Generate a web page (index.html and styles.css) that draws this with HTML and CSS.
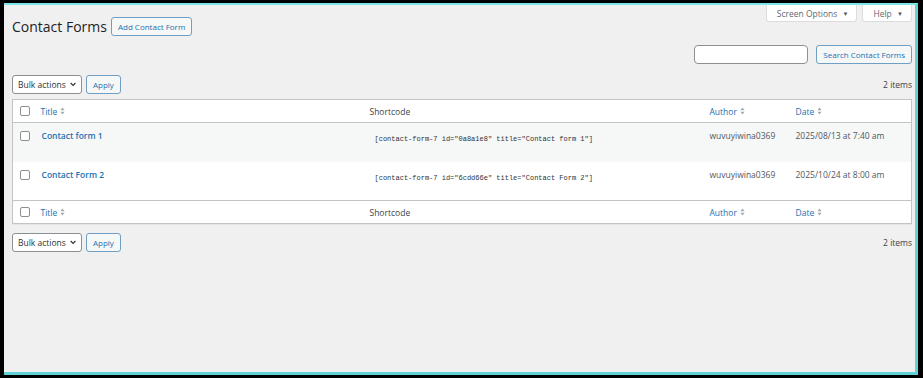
FILE: index.html
```html
<!DOCTYPE html>
<html lang="en">
<head>
  <meta charset="UTF-8">
  <title>Contact Forms</title>
  <link rel="stylesheet" href="styles.css">
</head>
<body>
  <div class="frame">
    <div class="screen-links">
      <button class="tab">Screen Options <span class="caret">&#9660;</span></button>
      <button class="tab">Help <span class="caret">&#9660;</span></button>
    </div>

    <div class="wrap">
      <div class="heading">
        <h1>Contact Forms</h1>
        <button class="btn">Add Contact Form</button>
      </div>

      <div class="search-box">
        <input type="search" class="search-input">
        <button class="btn">Search Contact Forms</button>
      </div>

      <div class="tablenav">
        <div class="actions">
          <div class="select">Bulk actions
            <svg width="7" height="5" viewBox="0 0 7 5"><polyline points="0.8,0.8 3.5,3.6 6.2,0.8" fill="none" stroke="#2c3338" stroke-width="1.3"/></svg>
          </div>
          <button class="btn">Apply</button>
        </div>
        <div class="count">2 items</div>
      </div>

      <table class="list">
        <colgroup>
          <col class="c-check">
          <col class="c-title">
          <col class="c-code">
          <col class="c-author">
          <col>
        </colgroup>
        <thead>
          <tr>
            <th><span class="box"></span></th>
            <th><a class="sort">Title <svg width="5" height="8" viewBox="0 0 5 8"><path d="M2.5 0.5 L4.6 3.2 H0.4 Z M2.5 7.5 L4.6 4.8 H0.4 Z" fill="#a7aaad"/></svg></a></th>
            <th class="plain">Shortcode</th>
            <th><a class="sort">Author <svg width="5" height="8" viewBox="0 0 5 8"><path d="M2.5 0.5 L4.6 3.2 H0.4 Z M2.5 7.5 L4.6 4.8 H0.4 Z" fill="#a7aaad"/></svg></a></th>
            <th><a class="sort">Date <svg width="5" height="8" viewBox="0 0 5 8"><path d="M2.5 0.5 L4.6 3.2 H0.4 Z M2.5 7.5 L4.6 4.8 H0.4 Z" fill="#a7aaad"/></svg></a></th>
          </tr>
        </thead>
        <tbody>
          <tr class="alt">
            <td><span class="box"></span></td>
            <td><a class="row-title">Contact form 1</a></td>
            <td><span class="shortcode">[contact-form-7 id="0a8a1e8" title="Contact form 1"]</span></td>
            <td>wuvuyiwina0369</td>
            <td>2025/08/13 at 7:40 am</td>
          </tr>
          <tr>
            <td><span class="box"></span></td>
            <td><a class="row-title">Contact Form 2</a></td>
            <td><span class="shortcode">[contact-form-7 id="6cdd66e" title="Contact Form 2"]</span></td>
            <td>wuvuyiwina0369</td>
            <td>2025/10/24 at 8:00 am</td>
          </tr>
        </tbody>
        <tfoot>
          <tr>
            <th><span class="box"></span></th>
            <th><a class="sort">Title <svg width="5" height="8" viewBox="0 0 5 8"><path d="M2.5 0.5 L4.6 3.2 H0.4 Z M2.5 7.5 L4.6 4.8 H0.4 Z" fill="#a7aaad"/></svg></a></th>
            <th class="plain">Shortcode</th>
            <th><a class="sort">Author <svg width="5" height="8" viewBox="0 0 5 8"><path d="M2.5 0.5 L4.6 3.2 H0.4 Z M2.5 7.5 L4.6 4.8 H0.4 Z" fill="#a7aaad"/></svg></a></th>
            <th><a class="sort">Date <svg width="5" height="8" viewBox="0 0 5 8"><path d="M2.5 0.5 L4.6 3.2 H0.4 Z M2.5 7.5 L4.6 4.8 H0.4 Z" fill="#a7aaad"/></svg></a></th>
          </tr>
        </tfoot>
      </table>

      <div class="tablenav bottom">
        <div class="actions">
          <div class="select">Bulk actions
            <svg width="7" height="5" viewBox="0 0 7 5"><polyline points="0.8,0.8 3.5,3.6 6.2,0.8" fill="none" stroke="#2c3338" stroke-width="1.3"/></svg>
          </div>
          <button class="btn">Apply</button>
        </div>
        <div class="count">2 items</div>
      </div>
    </div>
  </div>
</body>
</html>
```

FILE: styles.css
```css
* {
  margin: 0; padding: 0; box-sizing: border-box;
  font-family: 'Open Sans', sans-serif;
}
html, body { height: 100%; }
body {
  background: #000;
  padding: 3px 5px 3px 4px;
  font-size: 9px;
  color: #3c434a;
}
.frame {
  height: 100%;
  background: #f0f0f1;
  border-top: 2px solid #7fe6e8;
  border-right: 3px solid #5fd3d6;
  border-bottom: 3px solid #5fd3d6;
  padding: 0 3px 0 8px;
}
.screen-links {
  float: right;
  display: flex;
  gap: 5px;
}
.tab {
  background: #fff;
  border: 1px solid #dcdcde;
  border-top: none;
  border-radius: 0 0 3px 3px;
  height: 17px;
  padding: 0 8px 0 10px;
  font-size: 8.5px;
  color: #646970;
}
.caret { font-size: 6px; color: #50575e; margin-left: 3px; vertical-align: 1px; }
.wrap { padding-top: 12px; }
.heading {
  display: flex;
  align-items: center;
  gap: 4px;
  height: 19px;
}
h1 {
  font-size: 14px;
  font-weight: 400;
  color: #1d2327;
}
.btn {
  background: #f6f7f7;
  border: 1px solid #6f9fc4;
  border-radius: 3px;
  color: #2271b1;
  font-size: 8px;
  height: 19px;
  padding: 0 6px;
}
.search-box {
  display: flex;
  justify-content: flex-end;
  gap: 8px;
  margin-top: 9px;
  clear: both;
}
.search-input {
  width: 114px;
  height: 19px;
  border: 1px solid #8c8f94;
  border-radius: 4px;
  background: #fff;
}
.tablenav {
  display: flex;
  justify-content: space-between;
  align-items: center;
  margin-top: 10px;
  height: 20px;
}
.tablenav.bottom { margin-top: 8px; }
.actions { display: flex; gap: 4px; }
.select {
  display: flex;
  align-items: center;
  gap: 4px;
  height: 19px;
  padding: 0 5px;
  width: 70px;
  background: #fff;
  border: 1px solid #8c8f94;
  border-radius: 3px;
  color: #2c3338;
  font-size: 8.5px;
  white-space: nowrap;
}
.count { color: #3c434a; font-size: 8.5px; }
.list {
  width: 100%;
  margin-top: 5px;
  border: 1px solid #c3c4c7;
  border-collapse: collapse;
  table-layout: fixed;
  background: #fff;
  box-shadow: 0 1px 1px rgba(0,0,0,0.04);
}
.c-check { width: 21px; }
.c-title { width: 329px; }
.c-code { width: 340px; }
.c-author { width: 86px; }
th {
  text-align: left;
  font-weight: 400;
  height: 23px;
  padding: 0 7px;
  font-size: 8.5px;
}
thead th { border-bottom: 1px solid #c3c4c7; }
tfoot th { border-top: 1px solid #c3c4c7; }
th:first-child, td:first-child { padding: 0 0 0 7px; }
.sort { color: #2271b1; display: inline-flex; align-items: center; gap: 3px; }
.plain { color: #3c434a; }
td {
  height: 39px;
  vertical-align: top;
  padding: 7px 8px 0 7px;
  font-size: 8.5px;
  color: #50575e;
}
tbody tr.alt { background: #f6f7f7; }
td:first-child { padding-top: 8px; }
.box {
  display: block;
  width: 10px;
  height: 10px;
  border: 1px solid #8c8f94;
  border-radius: 2px;
  background: #fff;
}
.row-title {
  color: #2271b1;
  font-weight: 600;
  font-size: 8.5px;
  padding-left: 1px;
}
.shortcode {
  display: block;
  margin-top: 5px;
  padding-left: 5px;
  font-family: 'Liberation Mono', monospace;
  font-size: 7px;
  color: #2c3338;
}
```
